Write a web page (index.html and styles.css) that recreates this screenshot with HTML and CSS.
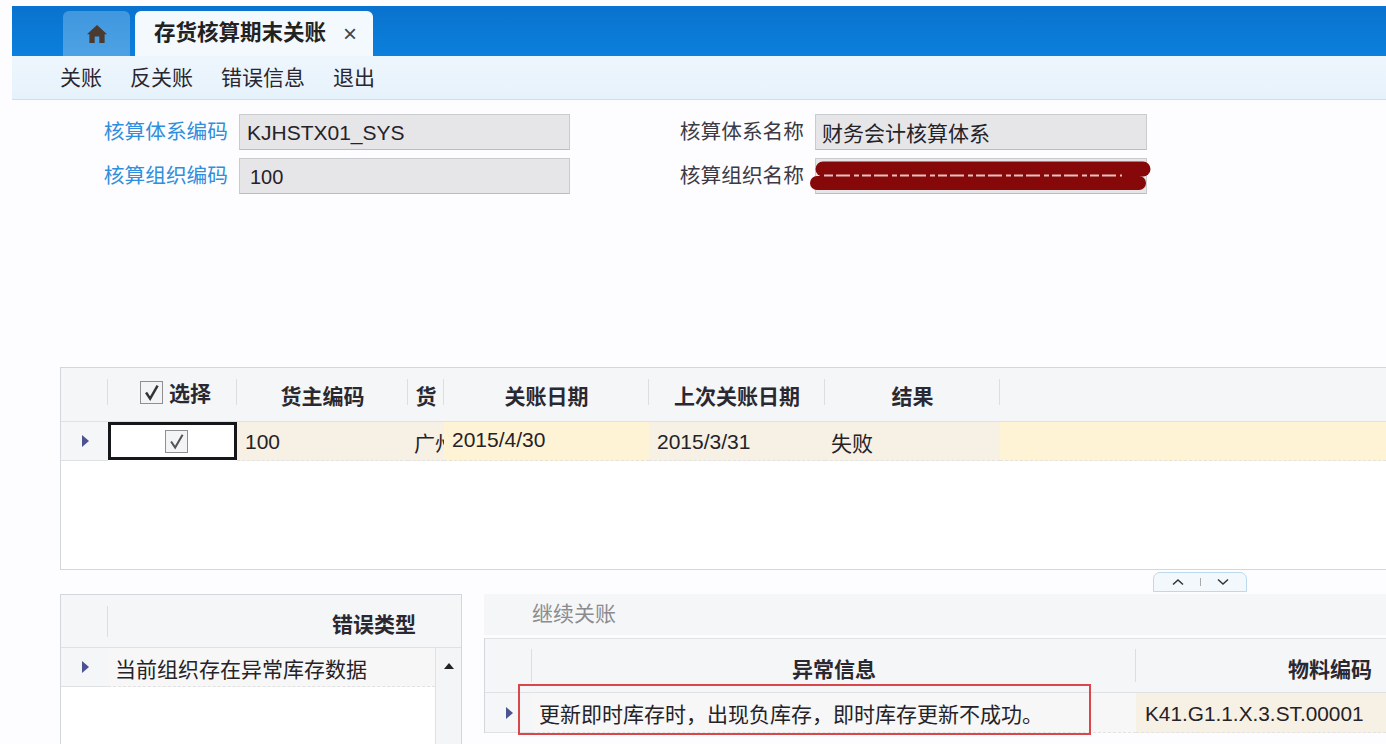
FILE: index.html
```html
<!DOCTYPE html>
<html lang="zh-CN">
<head>
<meta charset="utf-8">
<title>存货核算期末关账</title>
<link rel="stylesheet" href="styles.css">
</head>
<body>
<div class="app">
  <header class="tabbar">
    <div class="tab tab-home">
      <svg class="home-icon" viewBox="0 0 20 18" width="20" height="18"><path d="M10 0 L20 9.2 L17.6 9.2 L17.6 18 L12.3 18 L12.3 11.6 L7.7 11.6 L7.7 18 L2.4 18 L2.4 9.2 L0 9.2 Z" fill="#4a3a30"/></svg>
    </div>
    <div class="tab tab-active">
      <span class="tab-title">存货核算期末关账</span>
      <span class="tab-close">×</span>
    </div>
  </header>
  <nav class="toolbar">
    <span class="tool">关账</span>
    <span class="tool">反关账</span>
    <span class="tool">错误信息</span>
    <span class="tool">退出</span>
  </nav>
  <section class="form">
    <label class="label link">核算体系编码</label>
    <div class="field field-latin">KJHSTX01_SYS</div>
    <label class="label">核算体系名称</label>
    <div class="field field-cn">财务会计核算体系</div>
    <label class="label link">核算组织编码</label>
    <div class="field field-num">100</div>
    <label class="label">核算组织名称</label>
    <div class="field field-redacted">
      <svg class="scribble" viewBox="0 0 342 36" width="342" height="36"><path d="M13 11 L333 11" stroke="#860808" stroke-width="15" stroke-linecap="round" fill="none"/><path d="M7 25 L329 25" stroke="#860808" stroke-width="14" stroke-linecap="round" fill="none"/><path d="M14 17.5 L312 17.5" stroke="#e6c4c4" stroke-width="2" stroke-dasharray="9 3 14 4 5 3" fill="none"/></svg>
    </div>
  </section>

  <section class="grid-main">
    <div class="g-row g-head">
      <div class="hc"></div>
      <div class="hc hc-check"><span class="check check-head"><svg viewBox="0 0 14 14" width="14" height="14"><path d="M3 7 L6 11.5 L11.5 2" stroke="#333" stroke-width="1.8" fill="none"/></svg></span>选择</div>
      <div class="hc">货主编码</div>
      <div class="hc">货</div>
      <div class="hc">关账日期</div>
      <div class="hc">上次关账日期</div>
      <div class="hc">结果</div>
      <div class="hc hc-last"></div>
    </div>
    <div class="g-row g-body">
      <div class="c c-ind"><span class="arrow"></span></div>
      <div class="c c-sel"><span class="check"><svg viewBox="0 0 14 14" width="14" height="14"><path d="M3 7 L6 11.5 L11.5 2" stroke="#555" stroke-width="1.5" fill="none"/></svg></span></div>
      <div class="c c-tan">100</div>
      <div class="c c-tan c-clip">广州</div>
      <div class="c c-yellow c-date">2015/4/30</div>
      <div class="c c-tan">2015/3/31</div>
      <div class="c c-tan c-result">失败</div>
      <div class="c c-yellow"></div>
    </div>
  </section>

  <div class="splitter">
    <div class="split-btn">
      <svg viewBox="0 0 12 8" width="12" height="8"><path d="M1 6.5 L6 2 L11 6.5" stroke="#333" stroke-width="1.5" fill="none"/></svg>
      <span class="split-sep"></span>
      <svg viewBox="0 0 12 8" width="12" height="8"><path d="M1 1.5 L6 6 L11 1.5" stroke="#333" stroke-width="1.5" fill="none"/></svg>
    </div>
  </div>

  <section class="bottom">
    <div class="panel-left">
      <div class="pl-row pl-head">
        <div class="hc"></div>
        <div class="hc hc-right">错误类型</div>
      </div>
      <div class="pl-row pl-body">
        <div class="c c-ind"><span class="arrow"></span></div>
        <div class="c c-plain c-err">当前组织存在异常库存数据</div>
        <div class="scrollbar"><span class="scroll-up"></span></div>
      </div>
    </div>
    <div class="panel-right">
      <div class="pr-tools">继续关账</div>
      <div class="pr-grid">
        <div class="pr-row pr-head">
          <div class="hc"></div>
          <div class="hc">异常信息</div>
          <div class="hc hc-right2">物料编码</div>
        </div>
        <div class="pr-row pr-body">
          <div class="c c-ind"><span class="arrow"></span></div>
          <div class="c c-plain c-msg">更新即时库存时，出现负库存，即时库存更新不成功。</div>
          <div class="c c-tan c-code">K41.G1.1.X.3.ST.00001</div>
        </div>
      </div>
      <div class="highlight"></div>
    </div>
  </section>
</div>
</body>
</html>
```
FILE: styles.css
```css
* { box-sizing: border-box; }
html, body { margin: 0; height: 744px; overflow: hidden; }
body {
  background: #fdfdff;
  color: #252228;
  font-family: "Liberation Sans", "Noto Sans CJK SC", sans-serif;
  font-size: 21px;
}
.app { padding: 6px 0 0 12px; height: 744px; overflow: hidden; }

/* tabs */
.tabbar {
  height: 50px;
  background: linear-gradient(#0a72cf, #0b80dc);
  display: flex;
  align-items: flex-end;
  padding-left: 51px;
  gap: 5px;
}
.tab {
  height: 45px;
  border-radius: 6px 6px 0 0;
  display: flex;
  align-items: center;
}
.tab-home {
  width: 67px;
  background: linear-gradient(#3f97de, #4ea2e4);
  justify-content: center;
}
.tab-active {
  width: 238px;
  background: #f4f9fd;
  padding-left: 19px;
}
.tab-title { font-weight: 700; font-size: 21.5px; color: #222; white-space: nowrap; line-height: 1; }
.tab-close { margin-left: 17px; font-size: 24px; color: #444; line-height: 1; }

/* toolbar */
.toolbar {
  height: 44px;
  background: linear-gradient(#eef6fd, #e6f2fb);
  border-bottom: 1px solid #c7e2f6;
  display: flex;
  align-items: center;
  padding-left: 48px;
  gap: 28px;
}
.tool { line-height: 1; color: #2a2630; }

/* form */
.form {
  display: grid;
  grid-template-columns: 216px 331px 223px 332px;
  grid-auto-rows: 36px;
  column-gap: 11px;
  row-gap: 8px;
  padding-top: 14px;
  height: 267px;
  align-content: start;
}
.label { text-align: right; line-height: 35px; color: #3c3a44; white-space: nowrap; font-size: 20.7px; }
.label.link { color: #2f8fdc; }
.field {
  background: #e6e6e8;
  border: 1px solid #c9cbce;
  border-bottom-color: #b9bcc2;
  padding-left: 7px;
  line-height: 36px;
  white-space: nowrap;
  position: relative;
}
.field-num { padding-left: 10px; font-size: 20px; }
.field-cn { padding-left: 6px; line-height: 38px; }
.scribble { position: absolute; left: -6px; top: -1px; }

/* main grid */
.grid-main {
  margin-left: 48px;
  height: 203px;
  border: 1px solid #d3d6da;
  border-right: 0;
  background: #fff;
}
.g-row {
  display: grid;
  grid-template-columns: 47px 129px 171px 36px 205px 176px 175px 1fr;
}
.g-head { height: 54px; background: #f5f6f7; border-bottom: 1px solid #dfe1e3; }
.g-body { height: 39px; }
.hc {
  font-weight: 700;
  display: flex;
  align-items: center;
  justify-content: center;
  white-space: nowrap;
  overflow: hidden;
  color: #2a2830;
  position: relative;
  font-size: 21px;
}
.hc::after {
  content: "";
  position: absolute;
  right: 0;
  top: 11px;
  bottom: 16px;
  width: 1px;
  background: #dcdee1;
}
.hc-last::after { display: none; }
.hc-check { gap: 6px; padding: 0 0 5px 6px; }
.c {
  display: flex;
  align-items: center;
  padding-left: 8px;
  white-space: nowrap;
  overflow: hidden;
  border-bottom: 1px dashed #e2e2e2;
}
.c-ind { background: #f5f6f7; padding-left: 21px; border-bottom: 1px solid #dfe1e3; }
.c-tan { background: #f6f1e4; padding-top: 2px; }
.c-yellow { background: #fff3d6; }
.c-clip { padding-left: 6px; }
.c-date { padding: 0 0 2px 8px; }
.c-result { padding: 2px 0 0 6px; }
.c-plain { background: #f7f7f7; }
.c-sel {
  background: #fff;
  border: 3px solid #16171a;
  justify-content: center;
  padding: 0 0 0 8px;
  height: 38px;
}
.arrow {
  width: 0;
  height: 0;
  border-left: 7px solid #4b5390;
  border-top: 6px solid transparent;
  border-bottom: 6px solid transparent;
}
.check {
  width: 23px;
  height: 23px;
  border: 1px solid #8d8f92;
  background: #f3f4f6;
  display: inline-flex;
  align-items: center;
  justify-content: center;
}
.check svg { width: 19px; height: 19px; }

/* splitter */
.splitter { height: 24px; display: flex; padding: 2px 0 0 1141px; }
.split-btn {
  width: 94px;
  height: 20px;
  border: 1px solid #bcd9ef;
  border-radius: 7px 7px 0 0;
  background: #f3f8fd;
  display: flex;
  align-items: center;
  justify-content: center;
  gap: 16px;
}
.split-sep { width: 1px; height: 8px; background: #aaa; }

/* bottom panels */
.bottom { display: flex; margin-left: 48px; gap: 22px; }
.panel-left { width: 402px; flex: none; border: 1px solid #d3d6da; border-bottom: 0; height: 150px; background: #fff; }
.pl-row { display: grid; grid-template-columns: 47px 1fr; }
.pl-head { height: 53px; background: #f5f6f7; border-bottom: 1px solid #dfe1e3; }
.pl-head .hc:first-child::after { bottom: 10px; }
.pl-head .hc:last-child::after { display: none; }
.hc-right { justify-content: flex-end; padding: 4px 45px 0 0; }
.pl-body { grid-template-columns: 47px 327px 26px; align-items: start; }
.pl-body .c { height: 39px; }
.c-err { padding: 2px 0 0 7px; }
.scrollbar {
  height: 96px;
  background: #f4f5f6;
  border-left: 1px solid #dfe1e3;
  display: flex;
  justify-content: center;
  padding-top: 15px;
}
.scroll-up {
  width: 0;
  height: 0;
  border-bottom: 6px solid #222;
  border-left: 5px solid transparent;
  border-right: 5px solid transparent;
}
.panel-right { flex: 1; min-width: 0; position: relative; }
.pr-tools {
  height: 41px;
  background: #f5f6f7;
  padding-left: 48px;
  color: #8a8c90;
  line-height: 40px;
}
.pr-grid { margin-top: 3px; border-top: 1px solid #dfe1e3; border-left: 1px solid #d3d6da; }
.pr-row { display: grid; grid-template-columns: 47px 604px 1fr; }
.pr-head { height: 54px; background: #f5f6f7; border-bottom: 1px solid #dfe1e3; }
.pr-head .hc { padding-top: 4px; }
.pr-head .hc::after { top: 10px; bottom: 10px; }
.pr-head .hc:last-child::after { display: none; }
.hc-right2 { justify-content: flex-end; padding-right: 14px; }
.pr-body { height: 40px; }
.c-msg { padding: 1px 0 0 7px; }
.c-code { padding: 2px 0 0 9px; font-size: 20.8px; }
.highlight {
  position: absolute;
  left: 34px;
  top: 90px;
  width: 573px;
  height: 51px;
  border: 2px solid #d9474a;
}
```
